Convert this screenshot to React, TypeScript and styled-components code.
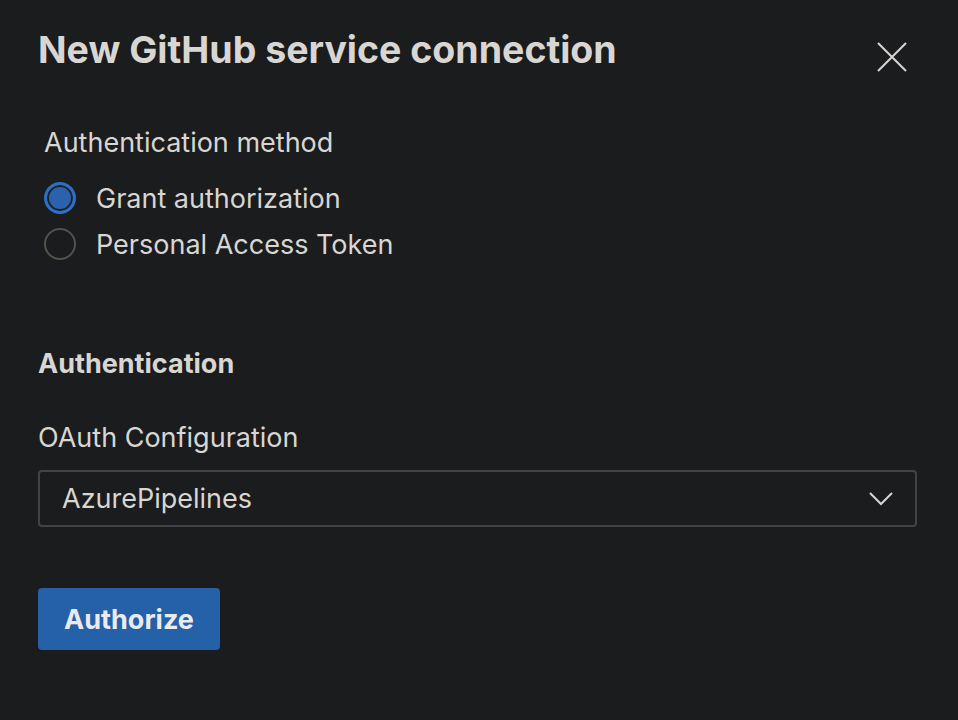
import React, { useState } from "react";
import styled, { createGlobalStyle } from "styled-components";

const Global = createGlobalStyle`
  html, body { margin: 0; padding: 0; background: #1b1c1e; }
  body { font-family: Inter, "Noto Sans", sans-serif; color: #d8d6d2; }
  * { box-sizing: border-box; }
`;

const Panel = styled.div`
  width: 958px;
  height: 720px;
  background: #1b1c1e;
  padding: 24px 41px 0 38px;
  display: flex;
  flex-direction: column;
`;

const Header = styled.div`
  display: flex;
  align-items: flex-start;
  justify-content: space-between;
`;

const Title = styled.h1`
  margin: 0;
  font-size: 37.5px;
  font-weight: 700;
  letter-spacing: 0;
  line-height: 52px;
  color: #d8d6d2;
`;

const CloseButton = styled.button`
  background: none;
  border: none;
  padding: 0;
  margin-top: 17px;
  margin-right: 9px;
  width: 32px;
  height: 32px;
  display: flex;
  align-items: center;
  justify-content: center;
  cursor: pointer;
`;

const Fieldset = styled.div`
  margin-top: 49px;
  padding-left: 6px;
  display: flex;
  flex-direction: column;
`;

const GroupLabel = styled.div`
  font-size: 27px;
  line-height: 36px;
  color: #d8d6d2;
  margin-bottom: 14px;
`;

const RadioRow = styled.label`
  display: flex;
  align-items: center;
  gap: 20px;
  height: 46px;
  cursor: pointer;
  font-size: 27px;
  color: #d8d6d2;
`;

const RadioCircle = styled.span<{ $checked: boolean }>`
  width: 32px;
  height: 32px;
  border-radius: 50%;
  flex: none;
  border: ${(p) => (p.$checked ? "3px solid #2e6fc4" : "2px solid #54524d")};
  background: ${(p) => (p.$checked ? "#2a62ad" : "#1b1c1e")};
  box-shadow: ${(p) => (p.$checked ? "inset 0 0 0 2px #1f2228" : "none")};
`;

const SectionTitle = styled.h2`
  margin: 79px 0 0;
  font-size: 27px;
  font-weight: 700;
  line-height: 36px;
  color: #d8d6d2;
`;

const FieldLabel = styled.div`
  margin-top: 38px;
  font-size: 27px;
  line-height: 36px;
  color: #d8d6d2;
`;

const Select = styled.div`
  margin-top: 14px;
  height: 57px;
  border: 2px solid #424346;
  border-radius: 4px;
  display: flex;
  align-items: center;
  justify-content: space-between;
  padding: 0 22px 0 22px;
  font-size: 27px;
  color: #d8d6d2;
  background: #1b1c1e;
`;

const PrimaryButton = styled.button`
  margin-top: 61px;
  align-self: flex-start;
  width: 182px;
  height: 62px;
  border: none;
  border-radius: 4px;
  background: #2461a8;
  color: #ebebed;
  font-family: Inter, "Noto Sans", sans-serif;
  font-size: 27px;
  font-weight: 700;
  cursor: pointer;
`;

export default function App() {
  const [method, setMethod] = useState("grant");
  return (
    <>
      <Global />
      <Panel>
        <Header>
          <Title>New GitHub service connection</Title>
          <CloseButton aria-label="Close">
            <svg width="30" height="30" viewBox="0 0 30 30">
              <path d="M1 1 L29 29 M29 1 L1 29" stroke="#d8d6d2" strokeWidth="2" fill="none" />
            </svg>
          </CloseButton>
        </Header>
        <Fieldset>
          <GroupLabel>Authentication method</GroupLabel>
          <RadioRow onClick={() => setMethod("grant")}>
            <RadioCircle $checked={method === "grant"} />
            Grant authorization
          </RadioRow>
          <RadioRow onClick={() => setMethod("pat")}>
            <RadioCircle $checked={method === "pat"} />
            Personal Access Token
          </RadioRow>
        </Fieldset>
        <SectionTitle>Authentication</SectionTitle>
        <FieldLabel>OAuth Configuration</FieldLabel>
        <Select>
          <span>AzurePipelines</span>
          <svg width="24" height="14" viewBox="0 0 24 14">
            <path d="M1 1 L12 12 L23 1" stroke="#d8d6d2" strokeWidth="2" fill="none" />
          </svg>
        </Select>
        <PrimaryButton>Authorize</PrimaryButton>
      </Panel>
    </>
  );
}
